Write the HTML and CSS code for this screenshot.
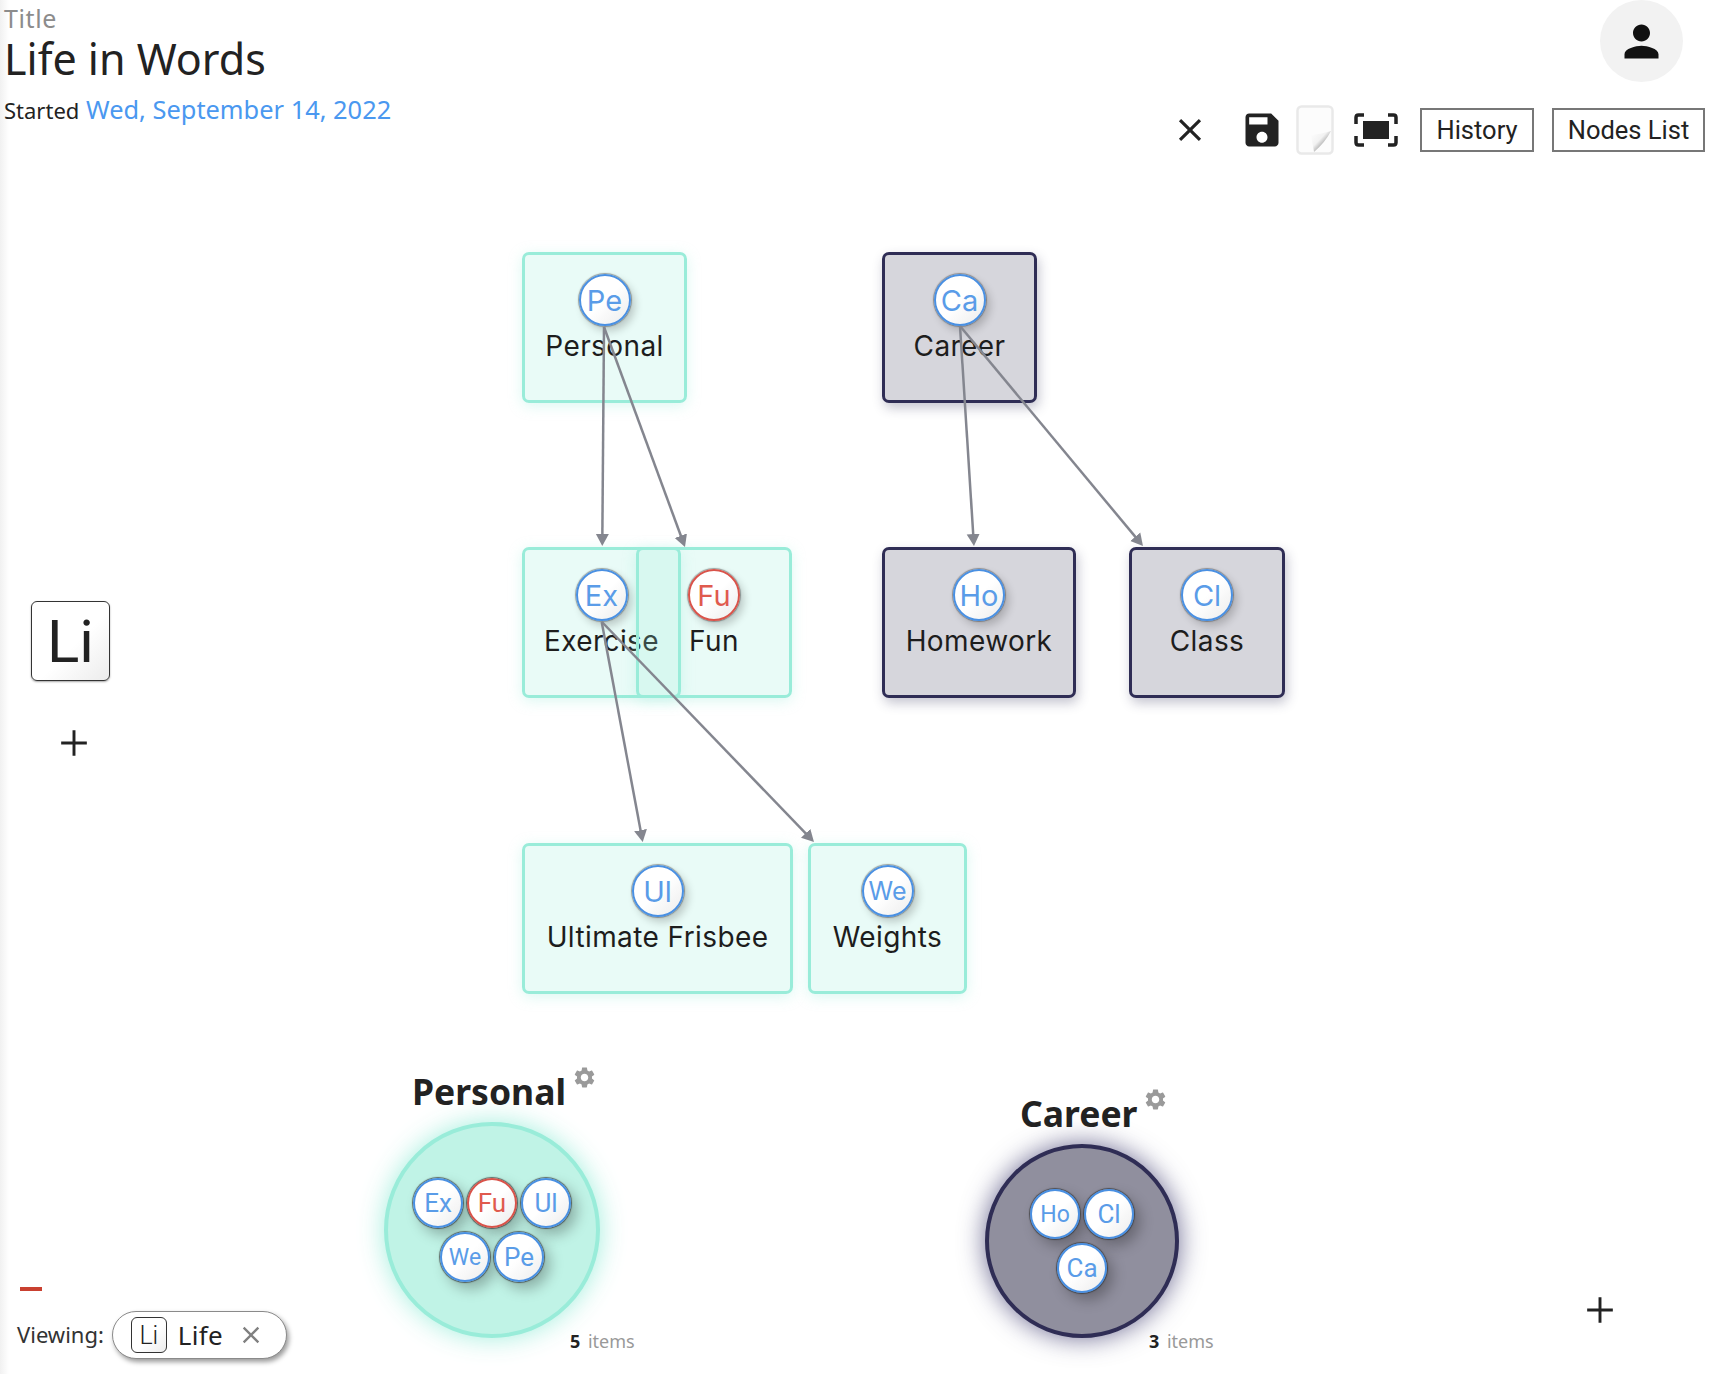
FILE: index.html
```html
<!DOCTYPE html>
<html lang="en">
<head>
    <meta charset="UTF-8">
    <meta name="viewport" content="width=device-width, initial-scale=1.0">
    <title>Life in Words</title>
    <link rel="stylesheet" href="styles.css">
</head>
<body>
    <svg class="icon-defs" width="0" height="0">
        <symbol id="i-gear" viewBox="0 0 24 24"><path d="M19.14 12.94c.04-.3.06-.61.06-.94 0-.32-.02-.64-.07-.94l2.03-1.58c.18-.14.23-.41.12-.61l-1.92-3.32c-.12-.22-.37-.29-.59-.22l-2.39.96c-.5-.38-1.03-.7-1.62-.94l-.36-2.54c-.04-.24-.24-.41-.48-.41h-3.84c-.24 0-.43.17-.47.41l-.36 2.54c-.59.24-1.13.57-1.62.94l-2.39-.96c-.22-.08-.47 0-.59.22L2.74 8.87c-.12.21-.08.47.12.61l2.03 1.58c-.05.3-.09.63-.09.94s.02.64.07.94l-2.03 1.58c-.18.14-.23.41-.12.61l1.92 3.32c.12.22.37.29.59.22l2.39-.96c.5.38 1.03.7 1.62.94l.36 2.54c.05.24.24.41.48.41h3.84c.24 0 .44-.17.47-.41l.36-2.54c.59-.24 1.13-.56 1.62-.94l2.39.96c.22.08.47 0 .59-.22l1.92-3.32c.12-.22.07-.47-.12-.61l-2.01-1.58zM12 15.6c-1.98 0-3.6-1.62-3.6-3.6s1.62-3.6 3.6-3.6 3.6 1.62 3.6 3.6-1.62 3.6-3.6 3.6z"/></symbol>
        <symbol id="i-close" viewBox="0 0 24 24"><path d="M19 6.41L17.59 5 12 10.59 6.41 5 5 6.41 10.59 12 5 17.59 6.41 19 12 13.41 17.59 19 19 17.59 13.41 12z"/></symbol>
        <symbol id="i-plus" viewBox="0 0 24 24"><path d="M10.750 1h2.500v9.750H23v2.500h-9.750V23h-2.500v-9.750H1v-2.500h9.750z"/></symbol>
    </svg>

    <div class="page">
        <header class="top">
            <div class="title-block">
                <div class="title-label">Title</div>
                <h1 class="title">Life in Words</h1>
                <div class="started">Started <span class="started-date">Wed, September 14, 2022</span></div>
            </div>
            <div class="top-right">
                <div class="avatar">
                    <svg class="avatar-icon" viewBox="0 0 24 24"><path d="M12 12c2.21 0 4-1.79 4-4s-1.79-4-4-4-4 1.79-4 4 1.79 4 4 4zm0 2c-2.67 0-8 1.34-8 4v2h16v-2c0-2.66-5.33-4-8-4z"/></svg>
                </div>
                <div class="toolbar">
                    <svg class="tool-close"><use href="#i-close"/></svg>
                    <svg class="tool-save" viewBox="0 0 24 24"><path d="M17 3H5c-1.11 0-2 .9-2 2v14c0 1.1.89 2 2 2h14c1.1 0 2-.9 2-2V7l-4-4zm-5 16c-1.66 0-3-1.34-3-3s1.34-3 3-3 3 1.34 3 3-1.34 3-3 3zm3-10H5V5h10v4z"/></svg>
                    <svg class="tool-paper" viewBox="0 0 38 50">
                        <defs>
                            <linearGradient id="curl" x1="0" y1="0" x2="1" y2="1">
                                <stop offset="0" stop-color="#ffffff"/>
                                <stop offset="0.42" stop-color="#f2f2f2"/>
                                <stop offset="0.62" stop-color="#b4b4b4"/>
                                <stop offset="1" stop-color="#e6e6e6"/>
                            </linearGradient>
                        </defs>
                        <rect x="1.500" y="1.500" width="35" height="47" rx="4" fill="#fcfcfc" stroke="#e9e9e9" stroke-width="2.500"/>
                        <path d="M15 30 C22 29 29 28 35 26 C31 34 25 41 18 47 C17 41 16 36 15 30z" fill="url(#curl)"/>
                    </svg>
                    <svg class="tool-fit" viewBox="0 0 44 34">
                        <path class="fit-corner" d="M2 11V4.500Q2 2 4.500 2H10M34 2H39.500Q42 2 42 4.500V11M42 23V29.500Q42 32 39.500 32H34M10 32H4.500Q2 32 2 29.500V23"/>
                        <rect x="9" y="8" width="26" height="18"/>
                    </svg>
                    <button class="tool-btn btn-history">History</button>
                    <button class="tool-btn btn-nodes">Nodes List</button>
                </div>
            </div>
        </header>

        <main class="main">
            <aside class="side">
                <div class="li-box">Li</div>
                <svg class="side-plus"><use href="#i-plus"/></svg>
            </aside>

            <section class="board">
                <div class="node teal n-personal"><span class="badge">Pe</span><span class="node-label">Personal</span></div>
                <div class="node teal n-exercise"><span class="badge">Ex</span><span class="node-label">Exercise</span></div>
                <div class="node teal n-fun"><span class="badge badge-red">Fu</span><span class="node-label">Fun</span></div>
                <div class="node teal n-ultimate"><span class="badge">Ul</span><span class="node-label">Ultimate Frisbee</span></div>
                <div class="node teal n-weights"><span class="badge badge-small">We</span><span class="node-label">Weights</span></div>
                <div class="node slate n-career"><span class="badge">Ca</span><span class="node-label">Career</span></div>
                <div class="node slate n-homework"><span class="badge">Ho</span><span class="node-label">Homework</span></div>
                <div class="node slate n-class"><span class="badge">Cl</span><span class="node-label">Class</span></div>

                <!-- coordinates in the viewBox are page pixels -->
                <svg class="links" viewBox="140 170 1576 890">
                    <defs>
                        <marker id="arrow" markerUnits="userSpaceOnUse" markerWidth="14" markerHeight="14" refX="8" refY="7" orient="auto">
                            <path d="M0 0.500L12 7L0 13.500z" fill="#84868f"/>
                        </marker>
                    </defs>
                    <line x1="604" y1="327" x2="602.300" y2="542" marker-end="url(#arrow)"/>
                    <line x1="604" y1="327" x2="683.600" y2="543.200" marker-end="url(#arrow)"/>
                    <line x1="601.700" y1="622" x2="642" y2="838" marker-end="url(#arrow)"/>
                    <line x1="602" y1="622" x2="811.200" y2="839.100" marker-end="url(#arrow)"/>
                    <line x1="960" y1="326" x2="973.700" y2="542" marker-end="url(#arrow)"/>
                    <line x1="960" y1="326" x2="1140.400" y2="542.900" marker-end="url(#arrow)"/>
                </svg>
            </section>
        </main>

        <footer class="bottom">
            <div class="viewing-col">
                <div class="minus"></div>
                <div class="viewing">
                    <span class="viewing-label">Viewing:</span>
                    <div class="pill">
                        <span class="pill-box">Li</span>
                        <span class="pill-text">Life</span>
                        <svg class="pill-close"><use href="#i-close"/></svg>
                    </div>
                </div>
            </div>

            <div class="group group-personal">
                <div class="group-head">
                    <span class="group-title">Personal</span>
                    <svg class="gear"><use href="#i-gear"/></svg>
                </div>
                <div class="bubble bubble-teal">
                    <span class="chip">Ex</span>
                    <span class="chip chip-red">Fu</span>
                    <span class="chip">Ul</span>
                    <span class="chip chip-small">We</span>
                    <span class="chip">Pe</span>
                </div>
                <div class="count"><b>5</b> items</div>
            </div>

            <div class="group group-career">
                <div class="group-head">
                    <span class="group-title">Career</span>
                    <svg class="gear"><use href="#i-gear"/></svg>
                </div>
                <div class="bubble bubble-slate">
                    <span class="chip chip-small">Ho</span>
                    <span class="chip">Cl</span>
                    <span class="chip">Ca</span>
                </div>
                <div class="count"><b>3</b> items</div>
            </div>

            <svg class="bottom-plus"><use href="#i-plus"/></svg>
        </footer>
    </div>
</body>
</html>
```
FILE: styles.css
```css
* {
    box-sizing: border-box;
}

body {
    margin: 0;
    font-family: "Noto Sans", sans-serif;
    color: #222;
    background: #fff;
}

.icon-defs {
    position: absolute;
}

.page {
    width: 1716px;
    height: 1374px;
    display: flex;
    flex-direction: column;
    overflow: hidden;
    background: linear-gradient(to right, #f1f1f1, #fff 9px);
}

/* header */
.top {
    height: 170px;
    display: flex;
    justify-content: space-between;
    flex-shrink: 0;
}

.title-block {
    padding: 3px 0 0 4px;
}

.title-label {
    font-size: 25px;
    letter-spacing: 0.600px;
    line-height: 30px;
    color: #8c8c8c;
}

.title {
    margin: 0;
    font-size: 43px;
    font-weight: 400;
    line-height: 52px;
    color: #222;
}

.started {
    font-size: 22px;
    line-height: 36px;
    margin-top: 6px;
}

.started-date {
    font-size: 25.400px;
    margin-left: 1px;
    color: #4a98f0;
}

.top-right {
    display: flex;
    flex-direction: column;
    align-items: flex-end;
}

.avatar {
    width: 83px;
    height: 82px;
    margin-right: 33px;
    border-radius: 50%;
    background: #f2f2f2;
    display: flex;
    align-items: center;
    justify-content: center;
}

.avatar-icon {
    width: 51px;
    height: 51px;
    fill: #111;
}

.toolbar {
    display: flex;
    align-items: center;
    height: 50px;
    margin: 23px 11px 0 0;
}

.tool-close {
    width: 38px;
    height: 38px;
    fill: #222;
}

.tool-save {
    width: 44px;
    height: 44px;
    margin-left: 31px;
    fill: #222;
}

.tool-paper {
    width: 38px;
    height: 50px;
    margin-left: 12px;
}

.tool-fit {
    width: 44px;
    height: 34px;
    margin-left: 20px;
    fill: #222;
}

.fit-corner {
    fill: none;
    stroke: #222;
    stroke-width: 3.500;
}

.tool-btn {
    height: 44px;
    font-family: Roboto, sans-serif;
    font-size: 25.500px;
    color: #222;
    background: #fff;
    border: 2px solid #777;
    padding: 0;
}

.btn-history {
    width: 114px;
    margin-left: 22px;
}

.btn-nodes {
    width: 153px;
    margin-left: 18px;
}

/* middle */
.main {
    height: 890px;
    display: flex;
    flex-shrink: 0;
}

.side {
    width: 140px;
    padding: 431px 0 0 31px;
    flex-shrink: 0;
}

.li-box {
    width: 79px;
    height: 80px;
    display: flex;
    align-items: center;
    justify-content: center;
    font-family: Roboto, sans-serif;
    font-size: 60px;
    font-weight: 400;
    color: #222;
    border: 1px solid #333;
    border-radius: 6px;
    background: linear-gradient(135deg, #fff 55%, #ececec);
    box-shadow: 0 1px 2px rgba(0, 0, 0, 0.35);
}

.side-plus {
    display: block;
    width: 28px;
    height: 28px;
    margin: 48px 0 0 29px;
    fill: #222;
}

.board {
    position: relative;
    flex: 1;
}

.links {
    position: absolute;
    left: 0;
    top: 0;
    width: 1576px;
    height: 890px;
    pointer-events: none;
}

.links line {
    stroke: #84868f;
    stroke-width: 2.500;
}

.node {
    position: absolute;
    height: 151px;
    padding-top: 19px;
    display: flex;
    flex-direction: column;
    align-items: center;
    border-radius: 7px;
    border: 3px solid;
}

.teal {
    border-color: #99ecd9;
    background: rgba(153, 236, 217, 0.22);
    box-shadow: 0 3px 14px rgba(153, 236, 217, 0.35);
}

.slate {
    border-color: #2f2d55;
    background: #d6d6dc;
    box-shadow: 2px 5px 12px rgba(47, 45, 85, 0.28);
}

.n-personal { left: 382px; top: 82px; width: 165px; }
.n-career { left: 742px; top: 82px; width: 155px; }
.n-exercise { left: 382px; top: 377px; width: 159px; }
.n-fun { left: 496px; top: 377px; width: 156px; }
.n-homework { left: 742px; top: 377px; width: 194px; }
.n-class { left: 989px; top: 377px; width: 156px; }
.n-ultimate { left: 382px; top: 673px; width: 271px; }
.n-weights { left: 668px; top: 673px; width: 159px; }

.badge {
    width: 52px;
    height: 52px;
    display: flex;
    align-items: center;
    justify-content: center;
    flex-shrink: 0;
    font-family: Inter, sans-serif;
    font-size: 29px;
    font-weight: 400;
    color: #5a9ce8;
    border: 2px solid #4a90e2;
    border-radius: 50%;
    background: linear-gradient(135deg, #fff 50%, #ececec);
    box-shadow: 0 0 1px 1px rgba(70, 70, 70, 0.5), 4px 5px 9px rgba(0, 0, 0, 0.2);
}

.badge-red {
    color: #e05a4e;
    border-color: #d9534a;
}

.badge-small {
    font-size: 25px;
}

.node-label {
    margin-top: 2px;
    font-family: Inter, sans-serif;
    font-size: 28px;
    font-weight: 400;
    letter-spacing: 0.400px;
    line-height: 36px;
    white-space: nowrap;
    color: #1d1d1d;
}

/* bottom row */
.bottom {
    flex: 1;
    display: flex;
    align-items: flex-end;
    padding-left: 17px;
}

.viewing-col {
    width: 367px;
    flex-shrink: 0;
    padding-bottom: 15px;
}

.minus {
    width: 22px;
    height: 4px;
    margin: 0 0 20px 3px;
    background: #c94030;
}

.viewing {
    display: flex;
    align-items: center;
    gap: 8px;
}

.viewing-label {
    font-size: 22px;
    line-height: 30px;
    margin-bottom: 2px;
    color: #333;
}

.pill {
    width: 175px;
    height: 48px;
    display: flex;
    align-items: center;
    padding-left: 18px;
    border: 1px solid #8a8a8a;
    border-radius: 24px;
    background: #fff;
    box-shadow: 2px 3px 5px rgba(0, 0, 0, 0.4);
}

.pill-box {
    width: 36px;
    height: 36px;
    display: flex;
    align-items: center;
    justify-content: center;
    font-family: Roboto, sans-serif;
    font-size: 25px;
    font-weight: 300;
    border: 1px solid #333;
    border-radius: 6px;
    background: linear-gradient(135deg, #fff 55%, #ececec);
}

.pill-text {
    margin-left: 11px;
    font-size: 26px;
    letter-spacing: 0.300px;
    color: #222;
}

.pill-close {
    width: 28px;
    height: 28px;
    margin-left: 14px;
    fill: #808080;
}

.group {
    width: 260px;
    flex-shrink: 0;
    padding-bottom: 21px;
}

.group-career {
    margin-left: 341px;
}

.group-head {
    display: flex;
    align-items: flex-start;
}

.group-personal .group-head {
    padding-left: 28px;
}

.group-career .group-head {
    padding-left: 35px;
}

.group-title {
    font-size: 35.500px;
    font-weight: 700;
    line-height: 46px;
    margin: 8px 0 5px;
    color: #222;
}

.gear {
    width: 25px;
    height: 25px;
    margin: 5px 0 0 6px;
    fill: #9a9a9a;
}

.bubble {
    display: flex;
    flex-wrap: wrap;
    align-items: center;
    align-content: center;
    justify-content: center;
    gap: 4px;
    border-radius: 50%;
    margin-top: 3px;
}

.bubble-teal {
    width: 216px;
    height: 216px;
    padding: 0 24px;
    border: 4px solid #99ecd9;
    background: #c0f3e6;
    box-shadow: 0 0 26px rgba(153, 236, 217, 0.9);
}

.bubble-slate {
    width: 194px;
    height: 194px;
    padding: 0 30px;
    border: 4px solid #2f2d55;
    background: #908f9e;
    box-shadow: 0 0 26px rgba(60, 58, 110, 0.75);
}

.chip {
    width: 50px;
    height: 50px;
    display: flex;
    align-items: center;
    justify-content: center;
    font-family: Roboto, sans-serif;
    font-size: 26px;
    font-weight: 400;
    color: #5a9ce8;
    border: 2px solid #4a90e2;
    border-radius: 50%;
    background: linear-gradient(135deg, #fff 50%, #ececec);
    box-shadow: 0 0 1px 1px rgba(50, 50, 50, 0.7), 6px 7px 14px rgba(0, 0, 0, 0.28);
}

.chip-red {
    color: #e05a4e;
    border-color: #d9534a;
}

.chip-small {
    font-size: 23px;
}

.count {
    margin-top: -9px;
    padding-left: 186px;
    font-size: 18px;
    line-height: 24px;
    white-space: nowrap;
    color: #999;
}

.group-career .count {
    padding-left: 164px;
}

.count b {
    color: #222;
    margin-right: 3px;
}

.bottom-plus {
    width: 28px;
    height: 28px;
    margin: 0 0 50px 341px;
    fill: #222;
}
```
